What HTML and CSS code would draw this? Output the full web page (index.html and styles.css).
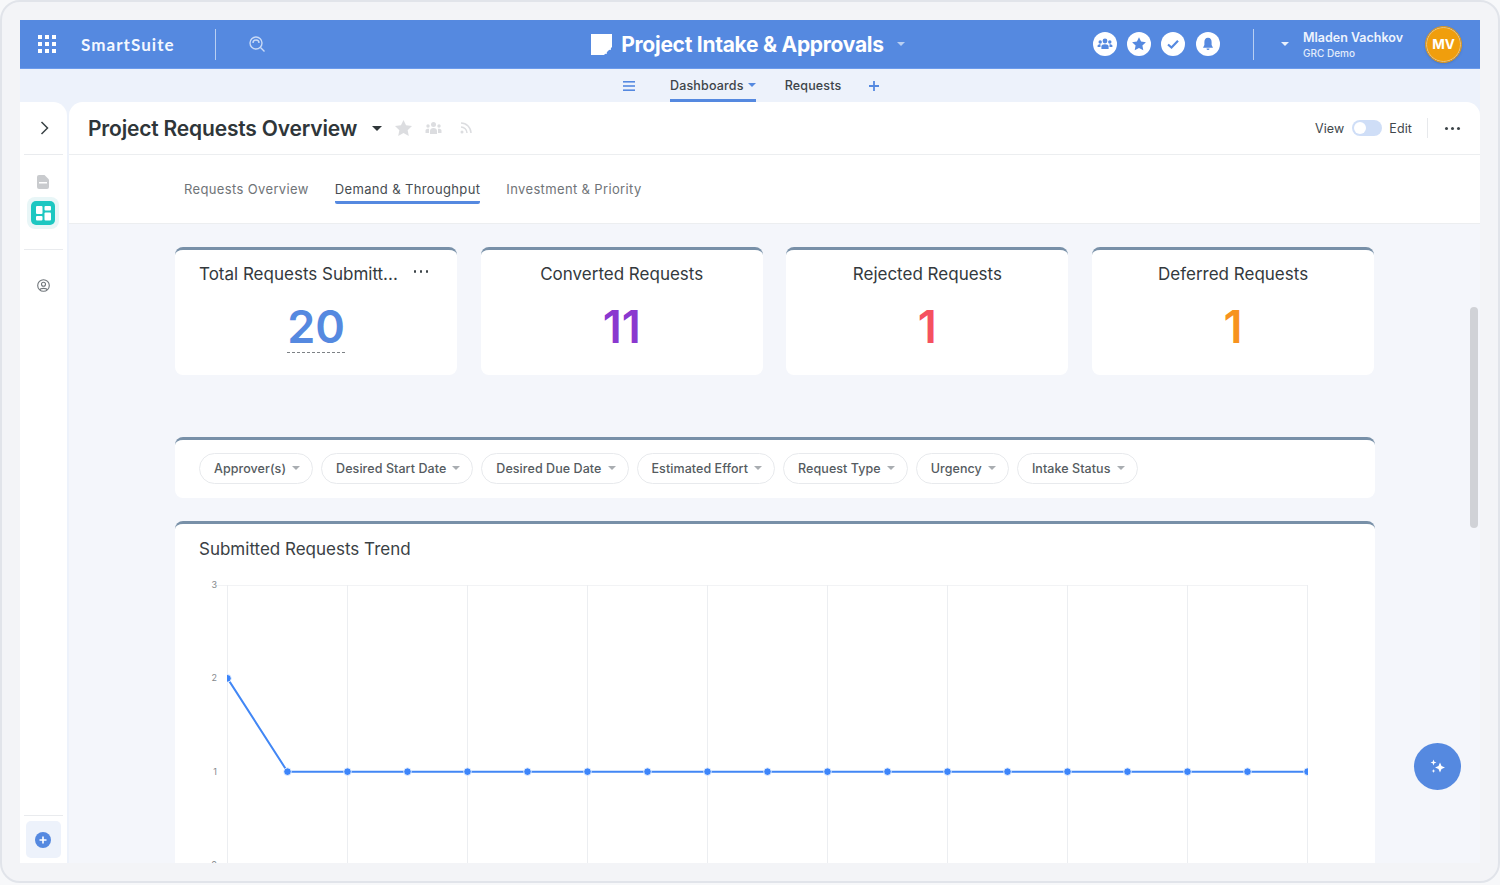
FILE: index.html
```html
<!DOCTYPE html>
<html lang="en">
<head>
<meta charset="utf-8">
<title>Project Requests Overview</title>
<link rel="stylesheet" href="styles.css">
</head>
<body>
<div class="window">
  <div class="app">
    <header class="topbar">
      <div class="top-left">
        <svg class="grid-icon" width="18" height="18" viewBox="0 0 18 18" fill="#fff"><rect x="0" y="0" width="4" height="4"/><rect x="7" y="0" width="4" height="4"/><rect x="14" y="0" width="4" height="4"/><rect x="0" y="7" width="4" height="4"/><rect x="7" y="7" width="4" height="4"/><rect x="14" y="7" width="4" height="4"/><rect x="0" y="14" width="4" height="4"/><rect x="7" y="14" width="4" height="4"/><rect x="14" y="14" width="4" height="4"/></svg>
        <span class="logo">SmartSuite</span>
        <span class="top-divider"></span>
        <svg class="search-icon" width="16" height="16" viewBox="0 0 16 16" fill="none" stroke="#c9daf6" stroke-width="1.4"><circle cx="7" cy="7" r="6"/><path d="M11.5 11.5 15.5 15.5M4 7a3 3 0 0 1 6 0"/></svg>
      </div>
      <div class="top-title">
        <svg width="21" height="21" viewBox="0 0 21 21"><path d="M0 0H21V13L13 21H0Z" fill="#fff"/><path d="M15 20V15H20" fill="none" stroke="#fff" stroke-width="1.4"/></svg>
        <span class="solution">Project Intake &amp; Approvals</span>
        <span class="caret caret-top"></span>
      </div>
      <div class="top-right">
        <span class="round-icon"><svg width="16" height="16" viewBox="0 0 16 16" fill="#5589e0"><circle cx="8" cy="5" r="2.4"/><circle cx="3.2" cy="6" r="1.7"/><circle cx="12.8" cy="6" r="1.7"/><path d="M4.4 13V10.5C4.4 9 5.8 8.2 8 8.2S11.6 9 11.6 10.5V13Z"/><path d="M.6 11V9.7C.6 8.7 1.8 8.2 3.5 8.2V11ZM15.4 11V9.7C15.4 8.7 14.2 8.2 12.5 8.2V11Z"/></svg></span>
        <span class="round-icon"><svg width="16" height="16" viewBox="0 0 16 16" fill="#5589e0"><path d="M8 1.2 10.1 5.6 14.9 6.2 11.4 9.5 12.3 14.3 8 12 3.7 14.3 4.6 9.5 1.1 6.2 5.9 5.6Z"/></svg></span>
        <span class="round-icon"><svg width="14" height="14" viewBox="0 0 14 14" fill="none" stroke="#5589e0" stroke-width="2.2"><path d="M2 7.5 5.5 10.5 12 3.8"/></svg></span>
        <span class="round-icon"><svg width="14" height="14" viewBox="0 0 14 14" fill="#5589e0"><path d="M7 .8C4.5.8 3.4 2.7 3.4 5V8L2 10.7H12L10.6 8V5C10.6 2.7 9.5.8 7 .8Z"/><path d="M5.5 11.5H8.5A1.5 1.5 0 0 1 5.5 11.5Z"/></svg></span>
        <span class="top-divider user-divider"></span>
        <span class="caret caret-user"></span>
        <div class="user">
          <span class="user-name">Mladen Vachkov</span>
          <span class="user-org">GRC Demo</span>
        </div>
        <span class="avatar">MV</span>
      </div>
    </header>

    <nav class="subnav">
      <svg class="menu-icon" width="12" height="10" viewBox="0 0 12 10" fill="#5589e0"><rect width="12" height="1.6"/><rect y="4.2" width="12" height="1.6"/><rect y="8.4" width="12" height="1.6"/></svg>
      <span class="subnav-item active">Dashboards <i class="caret caret-blue"></i></span>
      <span class="subnav-item">Requests</span>
      <svg class="plus-icon" width="10" height="10" viewBox="0 0 10 10" stroke="#5589e0" stroke-width="1.8"><path d="M5 0V10M0 5H10"/></svg>
    </nav>

    <div class="main">
      <aside class="sidebar">
        <div class="side-top">
          <svg width="9" height="14" viewBox="0 0 9 14" fill="none" stroke="#3a4246" stroke-width="1.5"><path d="M1.5 1 7.5 7 1.5 13"/></svg>
        </div>
        <div class="side-group">
          <svg width="12" height="14" viewBox="0 0 12 14"><path d="M2 0H7.5L12 4.5V12A2 2 0 0 1 10 14H2A2 2 0 0 1 0 12V2A2 2 0 0 1 2 0Z" fill="#c9cbce"/><rect x="2" y="7" width="8" height="1.5" fill="#fff"/></svg>
          <span class="side-active"><span class="side-tile"><svg width="15" height="15" viewBox="0 0 15 15" fill="#fff"><rect width="6.5" height="8" rx="1"/><rect y="10" width="6.5" height="4.5" rx="1"/><rect x="8.5" width="6.5" height="4.5" rx="1"/><rect x="8.5" y="6.5" width="6.5" height="8" rx="1"/></svg></span></span>
        </div>
        <div class="side-group side-people">
          <svg width="13" height="13" viewBox="0 0 13 13" fill="none" stroke="#70767b" stroke-width="1.1"><circle cx="6.5" cy="6.5" r="5.8"/><circle cx="6.5" cy="5.2" r="2"/><path d="M2.8 10.8C3.5 8.9 9.5 8.9 10.2 10.8"/></svg>
        </div>
        <div class="side-bottom">
          <span class="side-add"><svg width="16" height="16" viewBox="0 0 16 16"><circle cx="8" cy="8" r="8" fill="#5589e0"/><path d="M8 4.5V11.5M4.5 8H11.5" stroke="#fff" stroke-width="1.6"/></svg></span>
        </div>
      </aside>

      <section class="content">
        <div class="page-header">
          <h1 class="page-title">Project Requests Overview</h1>
          <span class="caret caret-dark"></span>
          <svg class="hdr-star" width="17" height="16" viewBox="0 0 16 15" fill="#dcdde0"><path d="M8 0 10.4 5 16 5.7 11.9 9.5 13 15 8 12.3 3 15 4.1 9.5 0 5.7 5.6 5Z"/></svg>
          <svg class="hdr-team" width="17" height="14" viewBox="0 0 16 14" fill="#dcdde0"><circle cx="8" cy="3.5" r="2.5"/><circle cx="2.5" cy="5" r="1.7"/><circle cx="13.5" cy="5" r="1.7"/><path d="M4.5 13V10C4.5 8 6 7 8 7S11.5 8 11.5 10V13ZM0 12V9.5C0 8.3 1.2 7.8 3.5 7.8V12ZM16 12V9.5C16 8.3 14.8 7.8 12.5 7.8V12Z"/></svg>
          <svg class="hdr-rss" width="12" height="12" viewBox="0 0 12 12" fill="none" stroke="#dcdde0" stroke-width="1.5"><path d="M1 1C6.5 1 11 5.5 11 11M1 5C4.3 5 7 7.7 7 11"/><circle cx="2" cy="10" r="1.5" fill="#dcdde0" stroke="none"/></svg>
          <div class="header-right">
            <span class="mode">View</span>
            <span class="toggle"><span class="toggle-knob"></span></span>
            <span class="mode">Edit</span>
            <span class="header-divider"></span>
            <span class="dots dots-header"><i></i><i></i><i></i></span>
          </div>
        </div>

        <div class="tabs">
          <span class="tab">Requests Overview</span>
          <span class="tab tab-active">Demand &amp; Throughput</span>
          <span class="tab">Investment &amp; Priority</span>
        </div>

        <div class="canvas">
          <div class="metrics">
            <article class="card metric">
              <div class="metric-head metric-head-left"><span>Total Requests Submitt...</span><span class="dots dots-card"><i></i><i></i><i></i></span></div>
              <div class="metric-value value-blue underlined">20</div>
            </article>
            <article class="card metric">
              <div class="metric-head">Converted Requests</div>
              <div class="metric-value value-purple">11</div>
            </article>
            <article class="card metric">
              <div class="metric-head">Rejected Requests</div>
              <div class="metric-value value-red">1</div>
            </article>
            <article class="card metric">
              <div class="metric-head">Deferred Requests</div>
              <div class="metric-value value-orange">1</div>
            </article>
          </div>

          <div class="card filters">
            <span class="pill">Approver(s)<i class="caret caret-grey"></i></span>
            <span class="pill">Desired Start Date<i class="caret caret-grey"></i></span>
            <span class="pill">Desired Due Date<i class="caret caret-grey"></i></span>
            <span class="pill">Estimated Effort<i class="caret caret-grey"></i></span>
            <span class="pill">Request Type<i class="caret caret-grey"></i></span>
            <span class="pill">Urgency<i class="caret caret-grey"></i></span>
            <span class="pill">Intake Status<i class="caret caret-grey"></i></span>
          </div>

          <div class="card chart">
            <h2 class="chart-title">Submitted Requests Trend</h2>
            <svg id="trend" class="chart-svg" width="1200" height="300" viewBox="0 0 1200 300"></svg>
          </div>
        </div>

        <span class="scroll-thumb"></span>
        <button class="fab" type="button" aria-label="AI assistant"><svg width="18" height="18" viewBox="0 0 18 18" fill="#fff"><path d="M11 4.5 12.5 8 16 9.5 12.5 11 11 14.5 9.5 11 6 9.5 9.5 8Z"/><path d="M4.5 1.5 5.3 3.7 7.5 4.5 5.3 5.3 4.5 7.5 3.7 5.3 1.5 4.5 3.7 3.7Z"/><path d="M4.5 11 5 12.5 6.5 13 5 13.5 4.5 15 4 13.5 2.5 13 4 12.5Z"/></svg></button>
      </section>
    </div>
  </div>
</div>
<script src="chart.js"></script>
</body>
</html>
```

FILE: chart.js
```js
(function () {
  var svg = document.getElementById('trend');
  var ns = 'http://www.w3.org/2000/svg';
  function add(tag, attrs, text) {
    var el = document.createElementNS(ns, tag);
    Object.keys(attrs).forEach(function (k) { el.setAttribute(k, attrs[k]); });
    if (text !== undefined) el.textContent = text;
    svg.appendChild(el);
    return el;
  }
  var left = 52, right = 1132, top = 7, bottom = 287;
  var yFor = function (v) { return bottom - (v * (bottom - top)) / 3; };
  add('line', { x1: 40, x2: right, y1: top + 0.5, y2: top + 0.5, stroke: '#f2f3f5' });
  for (var i = 0; i <= 9; i++) {
    var x = left + 120 * i + 0.5;
    add('line', { x1: x, x2: x, y1: top, y2: bottom, stroke: '#eceef1' });
  }
  [3, 2, 1, 0].forEach(function (v) {
    add('text', { x: 42, y: yFor(v) + 3, 'text-anchor': 'end', 'font-size': 9, fill: '#85898d', 'font-family': 'Inter, sans-serif' }, String(v));
  });
  var clip = add('clipPath', { id: 'plot' });
  var r = document.createElementNS(ns, 'rect');
  r.setAttribute('x', left); r.setAttribute('y', 0);
  r.setAttribute('width', right - left + 1); r.setAttribute('height', 300);
  clip.appendChild(r);
  var points = [];
  for (var n = 0; n <= 18; n++) {
    points.push([left + n * 60 + 0.5, n === 0 ? yFor(2) : yFor(1)]);
  }
  add('polyline', {
    points: points.map(function (p) { return p.join(','); }).join(' '),
    fill: 'none', stroke: '#4287f5', 'stroke-width': 2, 'clip-path': 'url(#plot)'
  });
  points.forEach(function (p) {
    add('circle', { cx: p[0], cy: p[1], r: 3.8, fill: '#3d85fa', stroke: '#fff', 'stroke-width': 0.8, 'clip-path': 'url(#plot)' });
  });
})();
```

FILE: styles.css
```css
* { box-sizing: border-box; }
html, body { margin: 0; padding: 0; height: 885px; overflow: hidden; background: #f7f8fa; }
body { font-family: Inter, "Liberation Sans", sans-serif; color: #33393d; }
.window {
  width: 1500px; height: 883px; padding: 18px;
  border: 2px solid #e1e4ea; border-radius: 20px; background: #f3f4f7;
}
.app { height: 843px; display: flex; flex-direction: column; overflow: hidden; background: #edf2fb; }

.topbar {
  height: 49px; flex: none; display: grid; grid-template-columns: 1fr auto 1fr; align-items: center;
  background: #5589e0; border-bottom: 1px solid #6c9bec; color: #fff;
}
.top-left { display: flex; align-items: center; padding-left: 18px; }
.logo { margin-left: 25px; font-family: Lato, sans-serif; font-weight: 700; font-size: 17px; letter-spacing: 1.05px; color: #f4f8ff; }
.top-divider { width: 1px; height: 31px; background: #b9cff2; }
.top-left .top-divider { margin-left: 40px; }
.search-icon { margin-left: 33px; }
.top-title { display: flex; align-items: center; transform: translateX(-2px); }
.solution { margin-left: 9px; font-size: 21px; font-weight: 700; letter-spacing: -.28px; }
.caret { display: inline-block; width: 0; height: 0; border-left: 4px solid transparent; border-right: 4px solid transparent; border-top: 4px solid #333; }
.caret-top { margin-left: 13px; border-top-color: #b9cff2; }
.top-right { display: flex; align-items: center; justify-content: flex-end; padding-right: 19px; }
.round-icon { width: 24px; height: 24px; border-radius: 50%; background: #fff; display: flex; align-items: center; justify-content: center; margin-right: 10.3px; }
.user-divider { margin-left: 23px; }
.caret-user { margin-left: 27px; border-top-color: #eaf1fc; }
.user { display: flex; flex-direction: column; margin-left: 14px; width: 123px; }
.user-name { font-size: 12.5px; font-weight: 600; line-height: 16px; padding-top: 2px; box-sizing: content-box; color: #eef4fd; }
.user-org { font-size: 10px; font-weight: 500; line-height: 14px; color: #e3ecfb; }
.avatar {
  width: 35px; height: 35px; border-radius: 50%; background: #f09e0d; border: 1px solid #f7c875; outline: 1px solid #e89a12;
  display: flex; align-items: center; justify-content: center; color: #fff; font-size: 13.5px; font-weight: 700;
  box-shadow: 0 1px 3px rgba(0,0,0,.25);
}

.subnav { height: 33px; flex: none; display: flex; align-items: stretch; background: #edf2fb; padding-left: 603px; }
.menu-icon { margin-top: 12px; }
.subnav-item { display: flex; align-items: center; font-size: 12.5px; font-weight: 500; letter-spacing: .17px; color: #3d4449; }
.subnav-item.active { margin-left: 35px; padding-top: 2px; border-bottom: 3px solid #5589e0; height: 33px; gap: 4px; }
.subnav-item:not(.active) { margin-left: 29px; }
.caret-blue { border-top-color: #5589e0; }
.plus-icon { margin: 12px 0 0 28px; }

.main { flex: 1; min-height: 0; display: flex; }
.sidebar { width: 47px; flex: none; display: flex; flex-direction: column; background: #fff; border-radius: 0 14px 0 0; }
.side-top { height: 53px; flex: none; display: flex; align-items: center; justify-content: center; position: relative; padding: 0 0 2px 2px; }
.side-top::after, .side-group::after { content: ""; position: absolute; left: 4px; right: 4px; bottom: 0; height: 1px; background: #e9ebee; }
.side-group { display: flex; flex-direction: column; align-items: center; position: relative; padding-right: 1px; }
.side-group:nth-child(2) { height: 95px; padding-top: 20px; }
.side-active { width: 32px; height: 32px; margin-top: 8px; border-radius: 8px; background: #e8f6f7; display: flex; align-items: center; justify-content: center; }
.side-tile { width: 24px; height: 24px; border-radius: 5px; background: #1cc7c1; display: flex; align-items: center; justify-content: center; }
.side-people { padding-top: 29px; }
.side-people::after { display: none; }
.side-bottom { margin-top: auto; height: 48px; border-top: 1px solid #e9ebee; margin-left: 4px; margin-right: 4px; display: flex; justify-content: center; padding-top: 5px; }
.side-add { width: 35px; height: 37px; border-radius: 5px; background: #edf2fb; display: flex; align-items: center; justify-content: center; padding-right: 1px; }

.content { flex: 1; min-width: 0; margin-left: 2px; display: flex; flex-direction: column; position: relative; background: #f4f6fb; border-radius: 14px 14px 0 0; overflow: hidden; }
.page-header { height: 53px; flex: none; display: flex; align-items: center; padding: 0 20px 0 19px; background: #fff; border-bottom: 1px solid #eceef0; }
.page-title { margin: 0; font-size: 21px; font-weight: 600; letter-spacing: -.18px; color: #2f3639; }
.caret-dark { margin-left: 15px; border-left-width: 5px; border-right-width: 5px; border-top-width: 5px; border-top-color: #2f3639; }
.hdr-star { margin-left: 13px; }
.hdr-team { margin-left: 13px; }
.hdr-rss { margin-left: 18px; }
.header-right { margin-left: auto; display: flex; align-items: center; }
.mode { font-size: 12.5px; letter-spacing: .1px; color: #41474c; }
.toggle { width: 30px; height: 16px; margin: 0 7px 0 8px; border-radius: 8px; background: #cfdef7; display: block; padding: 2px; }
.toggle-knob { display: block; width: 12px; height: 12px; border-radius: 50%; background: #fff; }
.header-divider { width: 1px; height: 20px; margin: 0 17px 0 15px; background: #e7e9ec; }
.dots { display: inline-flex; gap: 3px; }
.dots i { width: 3px; height: 3px; border-radius: 50%; background: #3d4449; display: block; }

.tabs { height: 69px; flex: none; display: flex; align-items: flex-start; gap: 26px; padding: 26px 0 0 115px; background: #fff; border-bottom: 1px solid #eceef0; }
.tab { height: 23px; font-size: 13px; line-height: 17px; color: #6f7478; letter-spacing: .36px; }
.tab-active { color: #464c51; border-bottom: 3px solid #5589e0; border-radius: 0 0 2px 2px; }

.canvas { flex: 1; min-height: 0; padding: 23px 0 0 106px; width: 1306px; overflow: hidden; }
.card { background: #fff; border-top: 3px solid #7890a8; border-radius: 8px; }
.metrics { display: grid; grid-template-columns: repeat(4, 282px); column-gap: 23.7px; }
.metric { height: 128px; display: flex; flex-direction: column; align-items: center; }
.metric-head { width: 100%; padding-top: 15px; height: 41px; font-size: 17px; line-height: 19px; color: #33393d; text-align: center; }
.metric-head-left { display: flex; justify-content: space-between; text-align: left; padding-left: 24px; padding-right: 29px; }
.dots-card { margin-top: 5px; gap: 3.5px; }
.dots-card i { width: 2.5px; height: 2.5px; }
.metric-value { margin-top: 13px; font-size: 45px; line-height: 46px; height: 49px; font-weight: 600; letter-spacing: 0; font-kerning: none; }
.underlined { border-bottom: 1px dashed #7d8286; }
.value-blue { color: #5589e0; }
.value-purple { color: #8a38cf; }
.value-red { color: #f5515f; }
.value-orange { color: #f7931e; }

.filters { width: 1200px; height: 61px; margin-top: 62px; display: flex; align-items: center; gap: 8px; padding: 0 24px 2px; }
.pill { height: 31px; padding: 0 12px 0 14px; display: flex; align-items: center; gap: 6px; border: 1px solid #e8eaed; border-radius: 16px; font-size: 12.5px; font-weight: 500; color: #555b60; letter-spacing: .07px; white-space: nowrap; }
.caret-grey { border-top-color: #a9adb1; }

.chart { width: 1200px; height: 400px; margin-top: 23px; }
.chart-title { margin: 0; padding: 15px 0 0 24px; height: 42px; font-size: 17px; line-height: 20px; font-weight: 400; color: #3a4145; }
.chart-svg { display: block; margin-top: 12px; overflow: hidden; }

.scroll-thumb { position: absolute; left: 1401px; top: 205px; width: 8px; height: 221px; border-radius: 4px; background: #d0d2d7; }
.fab { position: absolute; left: 1345px; top: 641px; width: 47px; height: 47px; border: 0; border-radius: 50%; background: #5589e0; display: flex; align-items: center; justify-content: center; padding: 0; }
```
